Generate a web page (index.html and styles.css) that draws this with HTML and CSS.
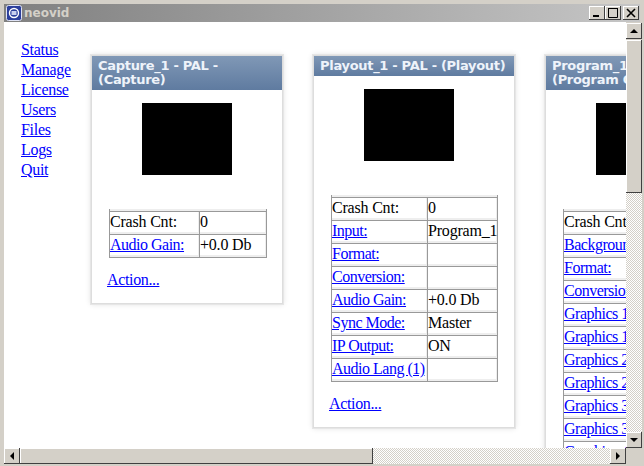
FILE: index.html
```html
<!DOCTYPE html>
<html lang="en">
<head>
<meta charset="utf-8">
<title>neovid</title>
<link rel="stylesheet" href="styles.css">
</head>
<body>
<div class="window">
  <header class="titlebar">
    <svg class="app-icon" width="16" height="16" viewBox="0 0 16 16"><rect x=".5" y=".5" width="15" height="15" rx="2" fill="#2c3f9c" stroke="#dfe3f5"/><circle cx="8" cy="8" r="4.5" fill="none" stroke="#fff" stroke-width="1.4"/><rect x="5.5" y="6" width="5" height="4" fill="#c9d0ef"/></svg>
    <span class="title">neovid</span>
    <div class="controls">
      <span class="ctl"><svg width="16" height="14" viewBox="0 0 16 14"><rect x="4" y="9" width="6" height="2" fill="#000"/></svg></span>
      <span class="ctl"><svg width="16" height="14" viewBox="0 0 16 14"><path d="M3.5 2.5h9v9h-9z" fill="none" stroke="#000"/><path d="M3 2.5h10" stroke="#000" stroke-width="1"/></svg></span>
      <span class="ctl close"><svg width="16" height="14" viewBox="0 0 16 14"><path d="M4 3l8 8M12 3l-8 8" stroke="#000" stroke-width="1.6"/></svg></span>
    </div>
  </header>
  <div class="client">
    <div class="viewport">
      <nav class="nav">
        <a href="#">Status</a><a href="#">Manage</a><a href="#">License</a><a href="#">Users</a><a href="#">Files</a><a href="#">Logs</a><a href="#">Quit</a>
      </nav>
      <section class="card card-capture">
        <h2>Capture_1 - PAL - (Capture)</h2>
        <div class="video"></div>
        <table>
          <tr><td>Crash Cnt:</td><td>0</td></tr>
          <tr><td><a href="#">Audio Gain:</a></td><td>+0.0 Db</td></tr>
        </table>
        <a class="action" href="#">Action...</a>
      </section>
      <section class="card card-playout">
        <h2>Playout_1 - PAL - (Playout)</h2>
        <div class="video"></div>
        <table>
          <tr><td>Crash Cnt:</td><td>0</td></tr>
          <tr><td><a href="#">Input:</a></td><td>Program_1</td></tr>
          <tr><td><a href="#">Format:</a></td><td></td></tr>
          <tr><td><a href="#">Conversion:</a></td><td></td></tr>
          <tr><td><a href="#">Audio Gain:</a></td><td>+0.0 Db</td></tr>
          <tr><td><a href="#">Sync Mode:</a></td><td>Master</td></tr>
          <tr><td><a href="#">IP Output:</a></td><td>ON</td></tr>
          <tr><td><a href="#">Audio Lang (1)</a></td><td></td></tr>
        </table>
        <a class="action" href="#">Action...</a>
      </section>
      <section class="card card-program">
        <h2>Program_1 - PAL -<br>(Program Out)</h2>
        <div class="video"></div>
        <table>
          <tr><td>Crash Cnt:</td><td>0</td></tr>
          <tr><td><a href="#">Background:</a></td><td></td></tr>
          <tr><td><a href="#">Format:</a></td><td></td></tr>
          <tr><td><a href="#">Conversion:</a></td><td></td></tr>
          <tr><td><a href="#">Graphics 1:</a></td><td></td></tr>
          <tr><td><a href="#">Graphics 1:</a></td><td></td></tr>
          <tr><td><a href="#">Graphics 2:</a></td><td></td></tr>
          <tr><td><a href="#">Graphics 2:</a></td><td></td></tr>
          <tr><td><a href="#">Graphics 3:</a></td><td></td></tr>
          <tr><td><a href="#">Graphics 3:</a></td><td></td></tr>
          <tr><td><a href="#">Graphics 4:</a></td><td></td></tr>
        </table>
      </section>
    </div>
    <div class="vbar">
      <span class="sbtn"><i class="arrow up"></i></span>
      <span class="vthumb"></span>
      <span class="track"></span>
      <span class="sbtn"><i class="arrow down"></i></span>
    </div>
    <div class="hbar">
      <span class="sbtn"><i class="arrow left"></i></span>
      <span class="hthumb"></span>
      <span class="track"></span>
      <span class="sbtn"><i class="arrow right"></i></span>
    </div>
    <div class="corner"></div>
  </div>
</div>
</body>
</html>
```
FILE: styles.css
```css
* { box-sizing: border-box; }
html, body { margin: 0; height: 100%; }
body { width: 644px; height: 466px; overflow: hidden; background: #d4d0c8; }
.window { width: 644px; height: 466px; padding: 4px; display: flex; flex-direction: column; background: #d4d0c8; }
.titlebar { height: 18px; flex: none; display: flex; align-items: center; padding: 0 1px 0 2px; background: linear-gradient(90deg, #808080, #c6c6c6); }
.app-icon { flex: none; }
.title { margin-left: 2px; font: bold 12px "DejaVu Sans", sans-serif; color: #d4d0c8; }
.controls { margin-left: auto; display: flex; }
.ctl { width: 16px; height: 14px; display: block; background: #d4d0c8; box-shadow: inset -1px -1px 0 #404040, inset 1px 1px 0 #fff; }
.ctl svg { display: block; }
.close { margin-left: 2px; }
.client { flex: 1; display: grid; grid-template-columns: 622px 16px; grid-template-rows: 426px 16px; background: #fff; min-height: 0; }
.viewport { overflow: hidden; background: #fff; display: flex; align-items: flex-start; padding: 17px 0 0 17px; font: 16px/20px "Liberation Serif", serif; color: #000; }
a { color: #00f; text-decoration: underline; }
.nav { width: 70px; flex: none; display: flex; flex-direction: column; margin-top: 1px; }
.nav a { display: block; height: 20px; letter-spacing: -.3px; }
.card { flex: none; margin-top: 16px; background: #fff; border: 1px solid #ddd; box-shadow: 0 0 0 1px #e6e6e6, 0 0 6px rgba(0,0,0,.14); padding: 0 0 14px; }
.card-capture { width: 192px; height: 249px; }
.card-playout { width: 202px; margin-left: 30px; height: 373px; }
.card-program { width: 260px; margin-left: 30px; height: 440px; }
.card h2 { margin: 0; padding: 3px 6px 3px 6px; font: bold 13px/14px "DejaVu Sans", sans-serif; letter-spacing: -.3px; color: #eef3fa; background: linear-gradient(180deg, #8098b6, #5f7ba0); white-space: nowrap; }
.card-capture h2 { white-space: normal; }
.video { width: 90px; height: 72px; margin: 13px 0 34px 50px; background: #000; }
table { border-collapse: separate; border-spacing: 0; table-layout: fixed; background: #eee; border-left: 1px solid #999; border-right: 1px solid #999; border-bottom: 1px solid #999; padding-top: 2px; }
td { padding: 0 1px 2px 0; height: 23px; background: #fff; background-clip: content-box; border-top: 1px solid #999; white-space: nowrap; line-height: 20px; vertical-align: top; }
td + td { border-left: 1px solid #999; letter-spacing: -.2px; }
td:first-child { letter-spacing: -.2px; }
td a { letter-spacing: -.5px; }
.card-capture table { margin-left: 17px; width: 158px; }
.card-capture td:first-child { width: 89px; }
.card-playout table { margin-left: 17px; width: 167px; }
.card-playout td:first-child { width: 95px; }
.card-program table { margin-left: 17px; width: 240px; }
.card-program td:first-child { width: 100px; }
.action { display: inline-block; margin: 12px 0 0 15px; letter-spacing: -.35px; }
.vbar { display: flex; flex-direction: column; grid-column: 2; grid-row: 1; background: #d4d0c8; padding-top: 1px; }
.hbar { display: flex; grid-column: 1; grid-row: 2; }
.sbtn { flex: none; width: 16px; height: 16px; background: #d4d0c8; box-shadow: inset -1px -1px 0 #404040, inset 1px 1px 0 #fff; display: flex; align-items: center; justify-content: center; }
.arrow { display: block; width: 0; height: 0; border: 4px solid transparent; }
.arrow.up { border-top-width: 0; border-bottom-color: #000; }
.arrow.down { border-bottom-width: 0; border-top-color: #000; }
.arrow.left { border-left-width: 0; border-right-color: #000; }
.arrow.right { border-right-width: 0; border-left-color: #000; }
.track { flex: 1; background: repeating-conic-gradient(#d4d0c8 0 25%, #fff 0 50%) 0 0 / 2px 2px; }
.vthumb { flex: none; height: 153px; margin-top: 1px; background: #d4d0c8; box-shadow: inset -1px -1px 0 #404040, inset 1px 1px 0 #fff; }
.hthumb { flex: none; width: 353px; background: #d4d0c8; box-shadow: inset -1px -1px 0 #404040, inset 1px 1px 0 #fff; }
.corner { background: #d4d0c8; }
```
